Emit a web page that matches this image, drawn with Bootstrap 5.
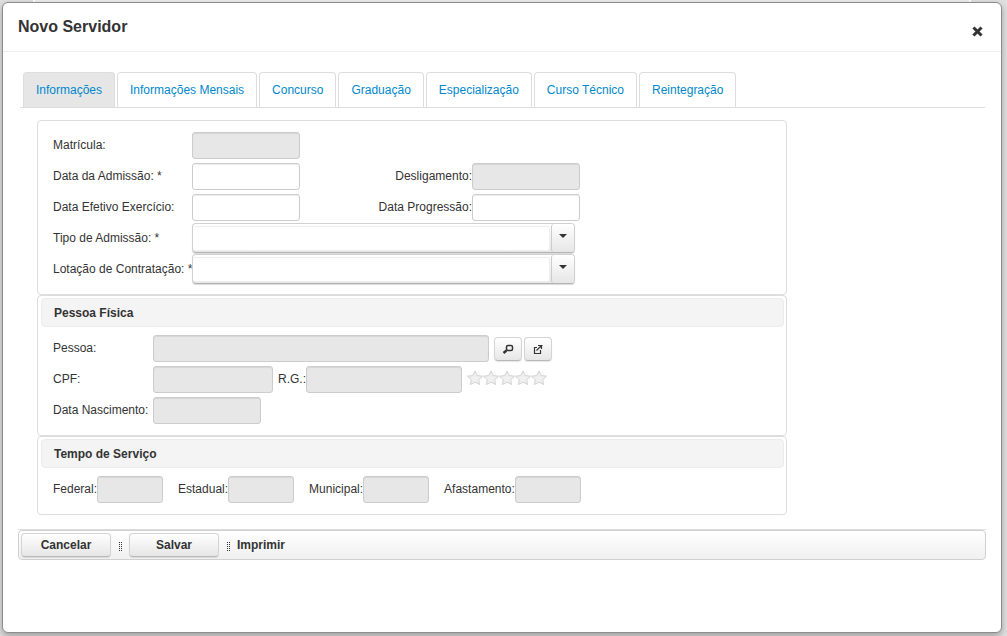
<!DOCTYPE html>
<html lang="pt-BR">
<head>
<meta charset="utf-8">
<meta name="viewport" content="width=device-width, initial-scale=1">
<title>Novo Servidor</title>
<link href="https://cdn.jsdelivr.net/npm/bootstrap@5.3.0/dist/css/bootstrap.min.css" rel="stylesheet">
<style>
  body { font-family: "Liberation Sans", Arial, sans-serif; font-size: 12px; line-height: 16px; color: #333; background: #e0e0e0; min-height: 100vh; padding: 2px 5px 3px 2px; position: relative; overflow-x: hidden; }
  .page-behind { left: 33px; right: 36px; top: 0; height: 8px; background: #eee; border: solid #fff; border-width: 0 2px; }
  .dlg { position: relative; min-height: calc(100vh - 5px); border: 1px solid #8c8c8c; border-radius: 6px; background: #fff; box-shadow: 0 3px 7px rgba(0,0,0,.3); }
  .dlg-head { height: 49px; padding: 0 18px 0 15px; border-bottom: 1px solid #eee; }
  .dlg-head h1 { font-size: 16px; line-height: 20px; font-weight: 700; }
  .dlg-close { border: 0; background: none; padding: 0; line-height: 0; margin-top: 8px; }
  .dlg-content { padding: 20px 15px 0; }
  .tabs { gap: 2px; padding-left: 3px; margin: 0 1px 0 2px; border-bottom: 1px solid #ddd; }
  .tabs .nav-link { font-size: 12px; line-height: 18px; color: #0088cc; padding: 8px 12px; border: 1px solid #ddd; border-bottom: 0; border-radius: 4px 4px 0 0; background: #fff; }
  .tabs .nav-link.active { background: #e6e6e6; color: #0088cc; border-color: #ddd; }
  .form-area { max-width: 750px; margin: 12px 0 0 19px; }
  .box { border: 1px solid #ddd; border-radius: 4px; padding: 2px 2px 3px 3px; }
  .box-first { padding-top: 3px; }
  .box h2 { font-size: 12px; line-height: 16px; font-weight: 700; margin: 0; padding: 6px 12px 5px; border: 1px solid #ececec; border-radius: 4px; background: #f4f4f4; }
  .rows { padding: 6px 12px; }
  .line { height: 31px; white-space: nowrap; }
  .line label { padding-bottom: 1px; }
  .w-label { width: 139px; }
  .w-label-sm { width: 100px; }
  .w-label-end { width: 172px; text-align: right; }
  .fld { height: 27px; border: 1px solid #ccc; border-radius: 3px; background: #fff; box-shadow: inset 0 1px 1px rgba(0,0,0,.075); padding: 4px 6px; font-size: 12px; min-width: 0; }
  .fld:disabled { background: #e7e7e7; }
  .w-date { width: 108px; } .w-name { width: 336px; } .w-cpf { width: 120px; } .w-rg { width: 156px; } .w-time { width: 66px; }
  .times .w-time { margin-right: 15px; }
  .space-5 { margin-left: 5px; }
  .space-2 { margin-left: 2px; }
  .combo { position: relative; align-self: flex-start; width: 383px; height: 30px; border: 1px solid #d0d0d0; border-bottom-color: #b3b3b3; border-radius: 4px; background: linear-gradient(#fff, #e6e6e6); box-shadow: 0 1px 1px rgba(0,0,0,.15); padding: 2px 24px 2px 0; }
  .combo select { display: block; width: 100%; height: 25px; border: 1px solid #eee; border-left: 0; border-radius: 3px; background: #fff; appearance: none; font-size: 12px; padding: 0 6px; }
  .combo-arrow { position: absolute; right: 0; top: 0; bottom: 0; width: 23px; border-left: 1px solid #ccc; border-radius: 3px; background: linear-gradient(#fff, #e6e6e6); pointer-events: none; }
  .btn-ui { font-size: 12px; line-height: 16px; font-weight: 700; color: #333; border: 1px solid #d4d4d4; border-bottom-color: #b8b8b8; border-radius: 4px; background: linear-gradient(#fff, #e6e6e6); box-shadow: 0 1px 1px rgba(0,0,0,.1); padding: 3px 0; height: 24px; width: 90px; }
  .btn-icon { width: 28px; line-height: 0; display: flex; align-items: center; justify-content: center; padding: 0; }
  .actions-wrap { border-top: 1px solid #ddd; margin-top: 14px; margin-bottom: 24px; }
  .actions { height: 30px; border: 1px solid #d0d0d0; border-radius: 4px; background: linear-gradient(#fff, #f0f0f0); padding: 2px; }
  .btn-plain { font-size: 12px; line-height: 16px; font-weight: 700; color: #333; border: 0; background: none; padding: 0; }
  .grip { flex: none; margin: 4px 7px 0 8px; }
</style>
</head>
<body>
<div class="page-behind position-absolute"></div>
<main class="dlg">
  <header class="dlg-head d-flex justify-content-between align-items-center">
    <h1 class="m-0">Novo Servidor</h1>
    <button class="dlg-close" type="button" aria-label="Fechar">
      <svg width="11" height="11" viewBox="0 0 11 11"><path d="M2.500 2.500L8.500 8.500M8.500 2.500L2.500 8.500" stroke="#333" stroke-width="3" stroke-linecap="square"/></svg>
    </button>
  </header>
  <div class="dlg-content">
    <nav class="nav tabs">
      <a class="nav-link active" href="#">Informações</a>
      <a class="nav-link" href="#">Informações Mensais</a>
      <a class="nav-link" href="#">Concurso</a>
      <a class="nav-link" href="#">Graduação</a>
      <a class="nav-link" href="#">Especialização</a>
      <a class="nav-link" href="#">Curso Técnico</a>
      <a class="nav-link" href="#">Reintegração</a>
    </nav>
    <form>
      <div class="form-area">
        <section class="box box-first">
          <div class="rows">
            <div class="line d-flex align-items-center"><label class="w-label" for="mat">Matrícula:</label><input class="fld w-date" id="mat" disabled></div>
            <div class="line d-flex align-items-center"><label class="w-label" for="adm">Data da Admissão: *</label><input class="fld w-date" id="adm"><label class="w-label-end" for="desl">Desligamento:</label><input class="fld w-date" id="desl" disabled></div>
            <div class="line d-flex align-items-center"><label class="w-label" for="exe">Data Efetivo Exercício:</label><input class="fld w-date" id="exe"><label class="w-label-end" for="prog">Data Progressão:</label><input class="fld w-date" id="prog"></div>
            <div class="line d-flex align-items-center"><label class="w-label" for="tipo">Tipo de Admissão: *</label>
              <div class="combo"><select id="tipo"><option></option></select><span class="combo-arrow d-flex justify-content-center"><svg class="mt-2" width="8" height="8" viewBox="0 0 8 8"><path d="M0 2h8L4 6z" fill="#333"/></svg></span></div></div>
            <div class="line d-flex align-items-center"><label class="w-label" for="lot">Lotação de Contratação: *</label>
              <div class="combo"><select id="lot"><option></option></select><span class="combo-arrow d-flex justify-content-center"><svg class="mt-2" width="8" height="8" viewBox="0 0 8 8"><path d="M0 2h8L4 6z" fill="#333"/></svg></span></div></div>
          </div>
        </section>
        <section class="box">
          <h2>Pessoa Física</h2>
          <div class="rows">
            <div class="line d-flex align-items-center"><label class="w-label-sm" for="pes">Pessoa:</label><input class="fld w-name" id="pes" disabled>
              <button class="btn-ui btn-icon space-5" type="button" aria-label="Pesquisar"><svg width="12" height="12" viewBox="0 0 12 12" fill="none" stroke="#333"><rect x="4.500" y="2.500" width="6" height="5" rx="1.500" stroke-width="1.500"/><path d="M4.500 7.500L1.500 10" stroke-width="2.400"/></svg></button>
              <button class="btn-ui btn-icon space-2" type="button" aria-label="Abrir"><svg width="10" height="10" viewBox="0 0 10 10" fill="none" stroke="#333"><path d="M4 3.500H1.500V9.500H7.500V6M3.500 6.500L8.500 1.500M5 1.500H9.500M8.500 1V5" stroke-width="1.200"/></svg></button>
            </div>
            <div class="line d-flex align-items-center"><label class="w-label-sm" for="cpf">CPF:</label><input class="fld w-cpf" id="cpf" disabled><label class="space-5" for="rg">R.G.:</label><input class="fld w-rg" id="rg" disabled>
              <svg class="space-5 mb-1" width="82" height="16" viewBox="0 0 82 16"><defs><path id="st" d="M8 1L10.200 5.600L15.500 6.200L11.700 9.800L12.600 14.500L8 12.200L3.400 14.500L4.300 9.800L.5 6.200L5.800 5.600Z" fill="#f0f0f0" stroke="#d2d2d2"/></defs><use href="#st"/><use href="#st" x="16"/><use href="#st" x="32"/><use href="#st" x="48"/><use href="#st" x="64"/></svg>
            </div>
            <div class="line d-flex align-items-center"><label class="w-label-sm" for="nas">Data Nascimento:</label><input class="fld w-date" id="nas" disabled></div>
          </div>
        </section>
        <section class="box">
          <h2>Tempo de Serviço</h2>
          <div class="rows">
            <div class="line d-flex align-items-center times">
              <label for="fed">Federal:</label><input class="fld w-time" id="fed" disabled>
              <label for="est">Estadual:</label><input class="fld w-time" id="est" disabled>
              <label for="mun">Municipal:</label><input class="fld w-time" id="mun" disabled>
              <label for="afa">Afastamento:</label><input class="fld w-time" id="afa" disabled>
            </div>
          </div>
        </section>
      </div>
      <div class="actions-wrap">
        <div class="actions d-flex align-items-center">
          <button class="btn-ui" type="button">Cancelar</button>
          <svg class="grip" width="3" height="10" viewBox="0 0 3 10"><path d="M.5 0V10M2.500 0V10" stroke="#333" stroke-dasharray="1 1"/></svg>
          <button class="btn-ui" type="button">Salvar</button>
          <svg class="grip" width="3" height="10" viewBox="0 0 3 10"><path d="M.5 0V10M2.500 0V10" stroke="#333" stroke-dasharray="1 1"/></svg>
          <button class="btn-plain" type="button">Imprimir</button>
        </div>
      </div>
    </form>
  </div>
</main>
<script src="https://cdn.jsdelivr.net/npm/bootstrap@5.3.0/dist/js/bootstrap.bundle.min.js"></script>
</body>
</html>
